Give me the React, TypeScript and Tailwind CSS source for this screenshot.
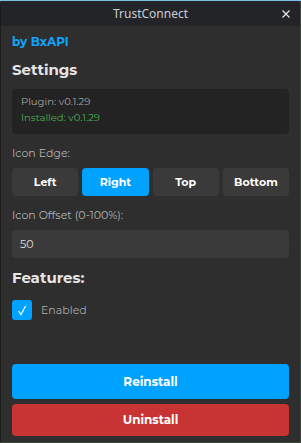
import { useState } from "react";

const edges = ["Left", "Right", "Top", "Bottom"];

export default function App() {
  const [edge, setEdge] = useState("Right");
  const [enabled, setEnabled] = useState(true);

  return (
    <div className="w-[301px] h-[443px] bg-[#3b4a3a] overflow-hidden" style={{ fontFamily: "Montserrat, 'Open Sans', sans-serif" }}>
      <div className="h-[1px] bg-[#7cc0ea]" />
      <div className="h-[441px] mr-[1px] flex flex-col bg-[#2e2e2e] border-l border-[#1c1c1c] rounded-tl-[3px] rounded-tr-[3px] overflow-hidden">
        <div className="h-[25px] shrink-0 bg-[#232428] relative flex items-center justify-center">
          <span className="text-[12px] text-[#c9cdd2]" style={{ fontFamily: "'Noto Sans', sans-serif" }}>TrustConnect</span>
          <svg className="absolute right-[10px] top-[9px]" width="8" height="8" viewBox="0 0 8 8">
            <path d="M0.5 0.5 L7.5 7.5 M7.5 0.5 L0.5 7.5" stroke="#e8e8e8" strokeWidth="1.2" />
          </svg>
        </div>

        <div className="flex-1 flex flex-col px-[11px]">
          <div className="mt-[8px] text-[12px] font-bold text-[#0ea5ff] leading-[16px]">by BxAPI</div>
          <div className="mt-[10px] text-[15px] font-bold text-[#e6e6e6] leading-[20px]">Settings</div>

          <div className="mt-[9px] h-[45px] rounded-[4px] bg-[#232323] px-[9px] pt-[6px] flex flex-col gap-[2px] text-[10px] leading-[14px]">
            <span className="text-[#a8a8a8]">Plugin: v0.1.29</span>
            <span className="text-[#4cae4f]">Installed: v0.1.29</span>
          </div>

          <div className="mt-[12px] text-[11px] text-[#b4b4b4] leading-[14px]">Icon Edge:</div>
          <div className="mt-[8px] grid grid-cols-4 gap-[4px]">
            {edges.map((e) => (
              <button
                key={e}
                onClick={() => setEdge(e)}
                className={
                  "h-[28px] rounded-[4px] text-[11px] font-bold text-white " +
                  (edge === e ? "bg-[#00a2ff]" : "bg-[#3a3a3a]")
                }
              >
                {e}
              </button>
            ))}
          </div>

          <div className="mt-[12px] text-[11px] text-[#b4b4b4] leading-[14px]">Icon Offset (0-100%):</div>
          <div className="mt-[8px] h-[28px] rounded-[4px] bg-[#3a3a3a] px-[8px] flex items-center text-[11px] text-[#e0e0e0]">50</div>

          <div className="mt-[10px] text-[15px] font-bold text-[#e6e6e6] leading-[20px]">Features:</div>

          <label className="mt-[12px] flex items-center gap-[9px] cursor-pointer" onClick={() => setEnabled(!enabled)}>
            <span className={"w-[20px] h-[20px] rounded-[3px] flex items-center justify-center " + (enabled ? "bg-[#00a2ff]" : "bg-[#3a3a3a]")}>
              {enabled && (
                <svg width="10" height="11" viewBox="0 0 10 11">
                  <path d="M1.5 6 L4 9.5 L8.5 1" stroke="white" strokeWidth="1.2" fill="none" />
                </svg>
              )}
            </span>
            <span className="text-[11px] text-[#a8a8a8]">Enabled</span>
          </label>

          <div className="mt-auto flex flex-col gap-[5px] pb-[6px]">
            <button className="h-[35px] rounded-[4px] bg-[#00a2ff] text-white text-[12px] font-bold">Reinstall</button>
            <button className="h-[32px] rounded-[4px] bg-[#c83333] text-white text-[12px] font-bold">Uninstall</button>
          </div>
        </div>
      </div>
    </div>
  );
}
